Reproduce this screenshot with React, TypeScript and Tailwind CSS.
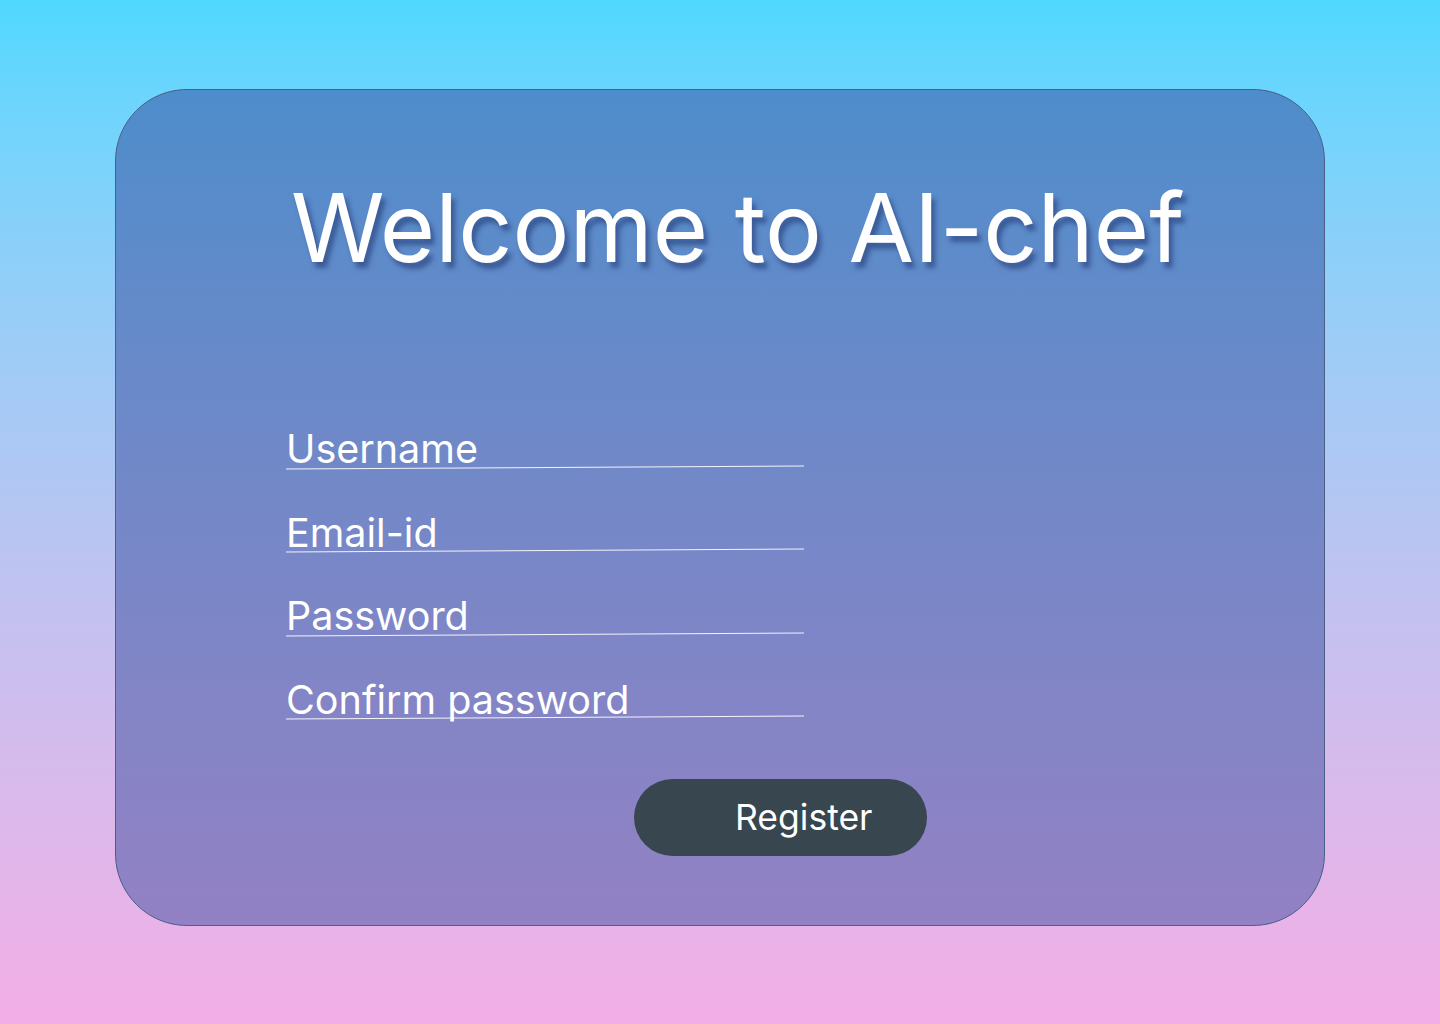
import React from "react";

const fields = ["Username", "Email-id", "Password", "Confirm password"];

function Field({ label }: { label: string }) {
  return (
    <div className="w-[518px]">
      <div className="text-[39.5px] leading-none text-white">{label}</div>
      <div className="h-px bg-white/90 -mt-[3px] rotate-[-0.33deg]" />
    </div>
  );
}

export default function App() {
  return (
    <div
      className="min-h-screen bg-gradient-to-b from-[#4fd8ff] to-[#f3aee6] pt-[89px] px-[115px]"
      style={{ fontFamily: "Inter, 'Noto Sans', sans-serif" }}
    >
      <div className="h-[837px] rounded-[72px] border border-[#4a5f86] bg-gradient-to-b from-[#4d8dcb] to-[#9281c4]">
        <h1 className="mt-[90px] pl-[175px] text-[95px] leading-none text-white [text-shadow:4px_6px_5px_rgba(30,50,110,0.55)]">
          Welcome to AI-chef
        </h1>
        <div className="mt-[155px] pl-[170px] flex flex-col gap-[46px]">
          {fields.map((f) => (
            <Field key={f} label={f} />
          ))}
        </div>
        <div className="mt-[61px] pl-[518px]">
          <button className="h-[77px] w-[293px] rounded-full bg-[#37464f] pl-[101px] text-left text-[35.5px] text-white">
            Register
          </button>
        </div>
      </div>
    </div>
  );
}
